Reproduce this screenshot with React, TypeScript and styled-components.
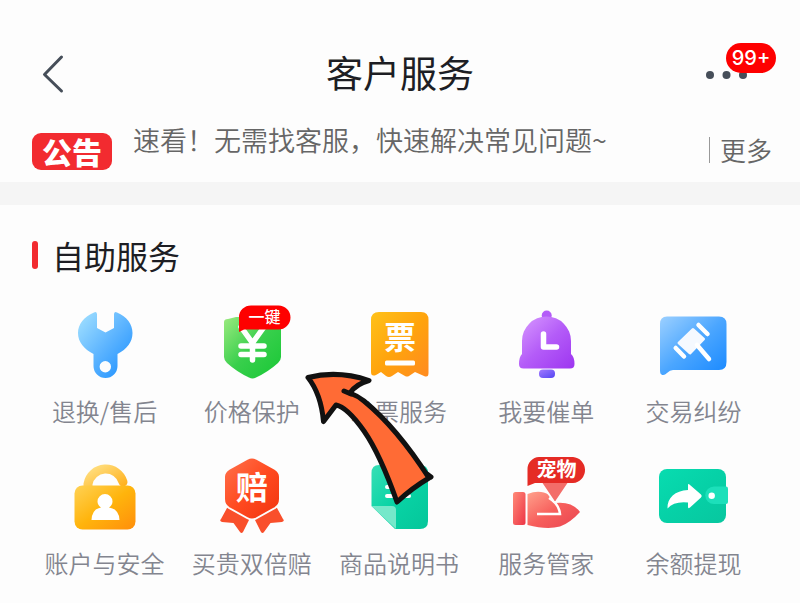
import React from "react";
import styled, { createGlobalStyle } from "styled-components";

const cjk = `"Noto Sans CJK SC", "Noto Sans", sans-serif`;

const GlobalStyle = createGlobalStyle`
  *, *::before, *::after { box-sizing: border-box; }
  body { margin: 0; background: #fdfdfd; color: #1d1e24; font-family: ${cjk}; }
  button { border: 0; padding: 0; background: none; font: inherit; color: inherit; cursor: pointer; }
  svg { display: block; }
`;

const Page = styled.div`
  overflow-x: hidden;
`;

const TopBar = styled.header`
  display: grid;
  grid-template-columns: 1fr auto 1fr;
  align-items: center;
  height: 116px;
  padding: 32px 24px 0;
`;

const Title = styled.h1`
  margin: 0;
  padding-bottom: 4px;
  font-size: 37px;
  line-height: 48px;
  font-weight: 400;
`;

const BackButton = styled.button`
  justify-self: start;
  padding: 0 16px;
`;

const MoreButton = styled.button`
  position: relative;
  justify-self: end;
  width: 70px;
  height: 48px;
`;

const CountBadge = styled.span`
  position: absolute;
  top: -7px;
  right: 0;
  width: 50px;
  height: 30px;
  border-radius: 15px;
  background: #fe0000;
  color: #fff;
  font: 500 20px/30px Inter, "Liberation Sans", sans-serif;
  text-align: center;
`;

const Notice = styled.section`
  display: flex;
  align-items: flex-start;
  height: 66px;
  padding: 4px 28px 0 32px;
  color: #666;
  font-size: 27px;
  line-height: 40px;
  font-weight: 350;
`;

const NoticeTag = styled.strong`
  flex: none;
  width: 80px;
  height: 37px;
  margin: 13px 21px 0 0;
  border-radius: 9px;
  background: #f22b30;
  color: #fff;
  font-size: 30px;
  line-height: 36px;
  font-weight: 900;
  text-align: center;
`;

const NoticeText = styled.span`
  flex: 1;
  white-space: nowrap;
`;

const MoreLink = styled.a`
  display: flex;
  align-items: center;
  gap: 10px;
  margin-top: 10px;
  color: inherit;
  font-size: 26px;
  text-decoration: none;

  &::before {
    content: "";
    width: 1px;
    height: 26px;
    background: #999;
  }
`;

const Divider = styled.div`
  height: 23px;
  background: #f5f5f5;
`;

const Services = styled.main`
  position: relative;
  padding: 26px 32px 20px;
`;

const SectionTitle = styled.h2`
  display: flex;
  align-items: center;
  gap: 14px;
  margin: 0 0 24px;
  font-size: 32px;
  line-height: 48px;
  font-weight: 400;

  &::before {
    content: "";
    width: 6px;
    height: 28px;
    border-radius: 3px;
    background: #f22b30;
  }
`;

const Grid = styled.div`
  display: grid;
  grid-template-columns: repeat(5, minmax(0, 1fr));
  row-gap: 26px;
  margin: 0 1px 0 -1px;
`;

const Service = styled.button`
  display: flex;
  flex-direction: column;
  align-items: center;
  gap: 10px;
`;

const Label = styled.span`
  color: #83858f;
  font-size: 24px;
  line-height: 36px;
  font-weight: 350;
  white-space: nowrap;
`;

const Icon = styled.svg.attrs({ viewBox: "0 0 80 80", "aria-hidden": true })`
  width: 80px;
  height: 80px;
  overflow: visible;
`;

const Glyph = styled.text<{ $size: number; $weight: number }>`
  font-family: ${cjk};
  font-size: ${(p) => p.$size}px;
  font-weight: ${(p) => p.$weight};
  fill: #fff;
  text-anchor: middle;
`;

const Pointer = styled.svg`
  position: absolute;
  top: 163px;
  left: calc(50% - 100px);
  width: 140px;
  height: 140px;
  pointer-events: none;
`;

type FadeProps = { id: string; from: string; mid?: string; to: string };

const Fade = ({ id, from, mid, to }: FadeProps) => (
  <linearGradient id={id} x1="0" y1="0" x2="1" y2="1">
    <stop offset="0" stopColor={from} />
    {mid && <stop offset="0.5" stopColor={mid} />}
    <stop offset="1" stopColor={to} />
  </linearGradient>
);

const Wrench = () => (
  <Icon>
    <Fade id="wrench" from="#a6e3ff" mid="#5eb5ff" to="#168cff" />
    <path
      fill="url(#wrench)"
      fillRule="evenodd"
      d="M32 11V25L40.500 29.500L49 25V11Q49.500 8 52 9.500C62 14 67.500 21 67.500 30C67.500 39 62 46 52.500 51V63A12 12 0 0 1 28.500 63V51C19 46 13 39 13 30C13 21 19 14 29 9.500Q31.500 8 32 11ZM40.300 58A5.700 5.700 0 1 0 40.300 69.400A5.700 5.700 0 1 0 40.300 58Z"
    />
  </Icon>
);

const Shield = () => (
  <Icon>
    <Fade id="shield" from="#9bea7f" mid="#38cf4c" to="#18c735" />
    <path fill="url(#shield)" d="M12 19Q12 16 16 16L24 14H65Q69 14 69 18V54Q69 57 66 60Q56 69 44 74.500Q40.500 76.500 37 74.500Q25 69 15 60Q12 57 12 54Z" />
    <path d="M29 24L40.500 40L52 24M29 43H52M29 51.500H52M40.500 40V57" fill="none" stroke="#fff" strokeWidth="5.500" strokeLinecap="round" />
    <path fill="#fe0000" d="M39 2.500H66.500A12 12 0 0 1 66.500 26.500H32L27 29V14A12 11.500 0 0 1 39 2.500Z" />
    <Glyph x="52.500" y="20" $size={16} $weight={500}>一键</Glyph>
  </Icon>
);

const Ticket = () => (
  <Icon>
    <Fade id="ticket" from="#ffc21a" mid="#ffa40d" to="#ff8a20" />
    <path fill="url(#ticket)" d="M20 9H62Q69.500 9 69.500 17V70Q69.500 75 65 73L56 69L50 73Q48 74 46 73L39 69L33 73Q30 75 27 73L22 69L17 72Q12 74 12 69V17Q12 9 20 9Z" />
    <Glyph x="41" y="46" $size={32} $weight={600}>票</Glyph>
    <rect x="26" y="57.500" width="30" height="5" rx="1.500" fill="#fff" />
  </Icon>
);

const Bell = () => (
  <Icon>
    <Fade id="bell" from="#d99bff" mid="#b45cf8" to="#9d35f0" />
    <Fade id="clapper" from="#a27aff" to="#5446f2" />
    <circle cx="40.700" cy="12.500" r="5" fill="#b45cf8" />
    <path fill="url(#bell)" d="M16 38A24.500 24.500 0 0 1 65 38V51Q68.500 54 68.500 61Q68.500 65.500 64 65.500H17.500Q13 65.500 13 61Q13 54 16 51Z" />
    <rect x="33" y="66.500" width="16" height="8.500" rx="4" fill="url(#clapper)" />
    <path d="M37.500 31V44H50.500" fill="none" stroke="#fff" strokeWidth="5.500" strokeLinecap="round" strokeLinejoin="round" />
  </Icon>
);

const Dispute = () => (
  <Icon>
    <Fade id="dispute" from="#9cd0ff" mid="#4ba6ff" to="#1888ff" />
    <path fill="url(#dispute)" d="M14 13.500H66Q73.500 13.500 73.500 21V59Q73.500 67 66 67H20Q17 67 14 70Q11 73 8.500 71.500Q7 71 7 67V21Q7 13.500 14 13.500Z" />
    <path d="M40 26.500L50.500 36L37 50L26 40Z" fill="#f5f9ff" stroke="#f5f9ff" strokeWidth="3" strokeLinejoin="round" />
    <path d="M45.500 22L54.500 31M22.700 45L31 53.500M44 42L56 56" fill="none" stroke="#fff" strokeWidth="4.500" strokeLinecap="round" />
  </Icon>
);

const Lock = () => (
  <Icon>
    <Fade id="lock" from="#ffd255" mid="#ffb40c" to="#ff8e0b" />
    <Fade id="shackle" from="#ffdf80" to="#ffad16" />
    <path d="M23 34V29A18 18 0 0 1 58 27" fill="none" stroke="url(#shackle)" strokeWidth="9" strokeLinecap="round" />
    <rect x="9.500" y="30.500" width="61" height="44" rx="8" fill="url(#lock)" />
    <path fill="#fff" d="M26.500 65Q27 54 36 52.500Q32.500 50 32.500 46.500A7.500 7.500 0 0 1 47.500 46.500Q47.500 50 44 52.500Q54 54 54.500 65Z" />
  </Icon>
);

const Medal = () => (
  <Icon>
    <Fade id="medal" from="#ff744f" mid="#ff4a20" to="#f1330e" />
    <path fill="#f94f2b" d="M18 52L37.500 64L31 77Q29.500 79 28 77L21.500 68L10 67Q7 66 9 64L15 53Q16 51 18 52ZM62 52L42.500 64L49 77Q50.500 79 52 77L58.500 68L70 67Q73 66 71 64L65 53Q64 51 62 52Z" />
    <path fill="url(#medal)" stroke="#fdfdfd" strokeWidth="2" d="M35 4Q40 1 45 4L63 14Q68 17 68 22V44Q68 50 63 53L45 63Q40 66 35 63L17 53Q12 50 12 44V22Q12 17 17 14Z" />
    <Glyph x="40" y="44" $size={32} $weight={700}>赔</Glyph>
  </Icon>
);

const Manual = () => (
  <Icon>
    <Fade id="manual" from="#37dfb5" mid="#08d3a5" to="#05c69a" />
    <path fill="url(#manual)" d="M20 10H61Q69 10 69 18V66Q69 74 61 74H36L12.500 51V18Q12.500 10 20 10Z" />
    <path fill="#75e8ca" d="M12.500 51H33Q37 51 37 55V74Z" />
    <path d="M28 32H50M28 41H50" stroke="#fff" strokeWidth="4" strokeLinecap="round" />
  </Icon>
);

const Butler = () => (
  <Icon>
    <Fade id="butler" from="#ffa18c" mid="#f75f5c" to="#e94450" />
    <Fade id="cuff" from="#ff8b78" to="#ed3446" />
    <path fill="url(#butler)" d="M21.500 39Q34 34 43 40L49 48Q66 46 74 57Q64 68 54 71.500Q41 75 21.500 70Z" />
    <path d="M43 43Q53 49 54 59H31" fill="none" stroke="#fff" strokeWidth="2.500" />
    <path fill="#f36d69" stroke="#fdfdfd" strokeWidth="2" d="M34 26H64L50.500 46Q49 48 47.500 46Z" />
    <rect x="7" y="37" width="12.500" height="33" rx="2.500" fill="url(#cuff)" />
    <path fill="#e52b25" d="M33 2H67A13 13 0 0 1 79 14.500A13 13 0 0 1 67 28H29L21.500 31V14A12 12 0 0 1 33 2Z" />
    <Glyph x="50.500" y="22" $size={20} $weight={700}>宠物</Glyph>
  </Icon>
);

const Wallet = () => (
  <Icon>
    <Fade id="wallet" from="#08dcb0" mid="#06d1a7" to="#08c79f" />
    <rect x="6" y="14" width="67" height="54" rx="8" fill="url(#wallet)" />
    <path fill="#1ce0ba" d="M61 31.500H73Q75 31.500 75 33.500V47Q75 49 73 49H61A8.750 8.750 0 0 1 61 31.500Z" />
    <circle cx="58.700" cy="40.700" r="3.200" fill="#fff" />
    <path fill="#fff" d="M35 30Q35 28 37 30L48 39.500Q49.500 41 48 42.500L37 52.500Q35 54 35 52V47.500Q21 46 14.500 53.500C14 43 22 35.500 35 35Z" />
  </Icon>
);

const services = [
  { label: "退换/售后", Art: Wrench },
  { label: "价格保护", Art: Shield },
  { label: "发票服务", Art: Ticket },
  { label: "我要催单", Art: Bell },
  { label: "交易纠纷", Art: Dispute },
  { label: "账户与安全", Art: Lock },
  { label: "买贵双倍赔", Art: Medal },
  { label: "商品说明书", Art: Manual },
  { label: "服务管家", Art: Butler },
  { label: "余额提现", Art: Wallet },
];

export default function App() {
  return (
    <Page>
      <GlobalStyle />
      <TopBar>
        <BackButton aria-label="返回">
          <svg width="26" height="40" viewBox="0 0 26 40" fill="none" stroke="#464e59" strokeWidth="3" strokeLinecap="round" strokeLinejoin="round">
            <path d="M21.500 3L4.500 20.500L21.500 37" />
          </svg>
        </BackButton>
        <Title>客户服务</Title>
        <MoreButton aria-label="更多消息">
          <svg width="70" height="48" viewBox="0 0 70 48" fill="#464e59">
            <circle cx="4" cy="25" r="4" />
            <circle cx="20.500" cy="25" r="4" />
            <circle cx="37" cy="25" r="4" />
          </svg>
          <CountBadge>99+</CountBadge>
        </MoreButton>
      </TopBar>
      <Notice>
        <NoticeTag>公告</NoticeTag>
        <NoticeText>速看！无需找客服，快速解决常见问题~</NoticeText>
        <MoreLink href="#more">更多</MoreLink>
      </Notice>
      <Divider />
      <Services>
        <SectionTitle>自助服务</SectionTitle>
        <Grid>
          {services.map(({ label, Art }) => (
            <Service key={label}>
              <Art />
              <Label>{label}</Label>
            </Service>
          ))}
        </Grid>
        <Pointer viewBox="300 368 140 140" aria-hidden="true">
          <path
            d="M308 377.500Q338 370 369 380.500Q356 384 350 393Q358 396 364 401Q397 428 429 478Q412 488 397 502Q380 454 364 431Q347 407 336 405L323.500 421.500Q321 394 308 377.500Z"
            fill="#ff6b35"
            stroke="#111"
            strokeWidth="5"
            strokeLinejoin="round"
          />
          <path d="M344 391L351 394M427 474L431 477" stroke="#111" strokeWidth="5" strokeLinecap="round" />
        </Pointer>
      </Services>
    </Page>
  );
}
